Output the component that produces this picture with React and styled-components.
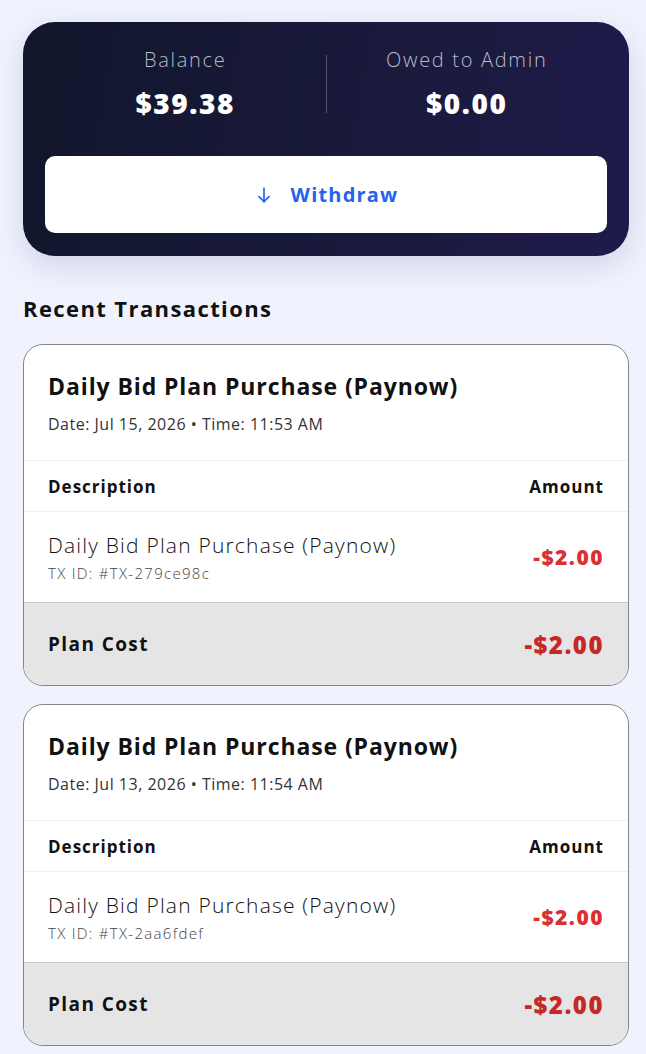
import React from 'react';
import styled, { createGlobalStyle } from 'styled-components';

const GlobalStyle = createGlobalStyle`
  html, body {
    margin: 0;
    padding: 0;
    background: #f0f3fd;
    font-family: "Open Sans", "Liberation Sans", sans-serif;
    color: #111;
  }
`;

const Page = styled.div`
  padding: 22px 17px 8px 23px;
  display: flex;
  flex-direction: column;
`;

const WalletCard = styled.div`
  background: linear-gradient(100deg, #11162b 0%, #1a1a3d 60%, #1e1b4b 100%);
  border-radius: 32px;
  padding: 23px 22px 23px;
  box-shadow: 0 10px 30px rgba(60, 70, 140, 0.18);
`;

const Stats = styled.div`
  display: grid;
  grid-template-columns: 1fr 1px 1fr;
  align-items: center;
  margin-bottom: 33px;
`;

const Stat = styled.div`
  display: flex;
  flex-direction: column;
  align-items: center;
  gap: 8px;
`;

const StatLabel = styled.div`
  font-size: 20px;
  line-height: 30px;
  font-weight: 300;
  letter-spacing: 1.7px;
  color: #b9bac6;
`;

const StatValue = styled.div`
  font-size: 28px;
  line-height: 40px;
  font-weight: 800;
  letter-spacing: 1.6px;
  color: #fff;
`;

const VDivider = styled.div`
  width: 1px;
  height: 58px;
  background: rgba(255, 255, 255, 0.25);
`;

const WithdrawButton = styled.button`
  width: 100%;
  height: 77px;
  border: none;
  border-radius: 10px;
  background: #fff;
  color: #2563eb;
  font-family: inherit;
  font-size: 20px;
  font-weight: 700;
  letter-spacing: 1.2px;
  display: flex;
  align-items: center;
  justify-content: center;
  gap: 17px;
`;

const SectionTitle = styled.h2`
  margin: 36px 0 19px;
  font-size: 22px;
  line-height: 33px;
  font-weight: 700;
  letter-spacing: 1.4px;
  color: #111;
`;

const TxList = styled.div`
  display: flex;
  flex-direction: column;
  gap: 18px;
`;

const TxCard = styled.div`
  background: #fff;
  border: 1px solid #858585;
  border-radius: 20px;
  overflow: hidden;
`;

const TxHead = styled.div`
  padding: 25px 24px 24px;
  border-bottom: 1px solid #f0f0f0;
`;

const TxTitle = styled.div`
  font-size: 23px;
  line-height: 33px;
  font-weight: 700;
  letter-spacing: 0.9px;
  color: #111;
  margin-bottom: 9px;
`;

const TxMeta = styled.div`
  font-size: 16px;
  line-height: 24px;
  letter-spacing: 0.5px;
  color: #333;
`;

const Row = styled.div`
  display: flex;
  justify-content: space-between;
  align-items: center;
  padding: 0 24px;
  min-height: ${p => p.$h}px;
  background: ${p => p.$bg || '#fff'};
  border-bottom: ${p => p.$border || 'none'};
`;

const HeadCell = styled.div`
  font-size: 17px;
  font-weight: 700;
  letter-spacing: 1px;
  color: #111;
`;

const ItemCol = styled.div`
  display: flex;
  flex-direction: column;
  gap: 3px;
`;

const ItemName = styled.div`
  font-size: 21px;
  line-height: 30px;
  font-weight: 300;
  letter-spacing: 1.2px;
  color: #111;
`;

const ItemId = styled.div`
  font-size: 15px;
  line-height: 21px;
  font-weight: 300;
  letter-spacing: 1.3px;
  color: #444;
`;

const Amount = styled.div`
  font-size: ${p => p.$size}px;
  font-weight: 800;
  letter-spacing: 1.5px;
  color: ${p => p.$color};
`;

const FooterLabel = styled.div`
  font-size: 19px;
  font-weight: 700;
  letter-spacing: 1.4px;
  color: #111;
`;

const ArrowDown = () => (
  <svg width="20" height="20" viewBox="0 0 24 24" fill="none" stroke="currentColor" strokeWidth="2" strokeLinecap="round" strokeLinejoin="round">
    <path d="M12 4v16" />
    <path d="M6 14l6 6 6-6" />
  </svg>
);

const transactions = [
  { id: 'TX-279ce98c', date: 'Jul 15, 2026', time: '11:53 AM' },
  { id: 'TX-2aa6fdef', date: 'Jul 13, 2026', time: '11:54 AM' },
];

function Transaction({ tx }) {
  return (
    <TxCard>
      <TxHead>
        <TxTitle>Daily Bid Plan Purchase (Paynow)</TxTitle>
        <TxMeta>Date: {tx.date} • Time: {tx.time}</TxMeta>
      </TxHead>
      <Row $h={50} $border="1px solid #f0f0f0">
        <HeadCell>Description</HeadCell>
        <HeadCell>Amount</HeadCell>
      </Row>
      <Row $h={90} $border="1px solid #c8c8c8">
        <ItemCol>
          <ItemName>Daily Bid Plan Purchase (Paynow)</ItemName>
          <ItemId>TX ID: #{tx.id}</ItemId>
        </ItemCol>
        <Amount $size={21} $color="#dc2f2f">-$2.00</Amount>
      </Row>
      <Row $h={82} $bg="#e5e5e5">
        <FooterLabel>Plan Cost</FooterLabel>
        <Amount $size={24} $color="#c62828">-$2.00</Amount>
      </Row>
    </TxCard>
  );
}

export default function App() {
  return (
    <>
      <GlobalStyle />
      <Page>
        <WalletCard>
          <Stats>
            <Stat>
              <StatLabel>Balance</StatLabel>
              <StatValue>$39.38</StatValue>
            </Stat>
            <VDivider />
            <Stat>
              <StatLabel>Owed to Admin</StatLabel>
              <StatValue>$0.00</StatValue>
            </Stat>
          </Stats>
          <WithdrawButton>
            <ArrowDown />
            Withdraw
          </WithdrawButton>
        </WalletCard>
        <SectionTitle>Recent Transactions</SectionTitle>
        <TxList>
          {transactions.map(tx => <Transaction key={tx.id} tx={tx} />)}
        </TxList>
      </Page>
    </>
  );
}
